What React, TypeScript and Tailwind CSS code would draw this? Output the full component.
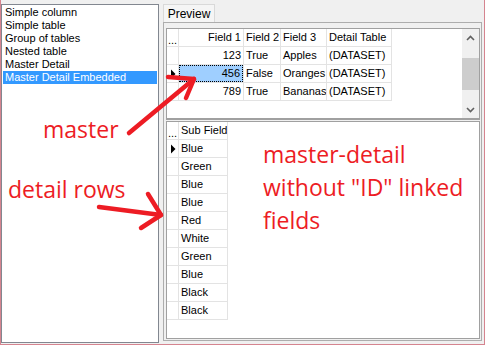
import React from "react";

const items = [
  "Simple column",
  "Simple table",
  "Group of tables",
  "Nested table",
  "Master Detail",
  "Master Detail Embedded",
];

const master = [
  { f1: "123", f2: "True", f3: "Apples", dt: "(DATASET)" },
  { f1: "456", f2: "False", f3: "Oranges", dt: "(DATASET)" },
  { f1: "789", f2: "True", f3: "Bananas", dt: "(DATASET)" },
];

const details = ["Blue", "Green", "Blue", "Blue", "Red", "White", "Green", "Blue", "Black", "Black"];

function Indicator({ active, header }: { active?: boolean; header?: boolean }) {
  return (
    <div className="flex h-[18px] w-[12px] shrink-0 items-center justify-center border-r border-b border-[#e3e3e3]">
      {header && <span className="mt-[6px] text-[11px] leading-none">...</span>}
      {active && (
        <svg width="6" height="10" viewBox="0 0 6 10" aria-hidden>
          <path d="M1 0.5 L5.5 5 L1 9.5 Z" fill="#000" />
        </svg>
      )}
    </div>
  );
}

function Cell({ w, children, right, selected }: { w: string; children: React.ReactNode; right?: boolean; selected?: boolean }) {
  return (
    <div className={`${w} flex h-[18px] shrink-0 items-center overflow-hidden border-r border-b border-[#e3e3e3]`}>
      <div
        className={`flex h-full w-full items-center whitespace-nowrap px-[2px] ${right ? "justify-end" : ""} ${
          selected ? "border border-dotted border-black bg-[#9fcfff] px-[1px]" : ""
        }`}
      >
        {children}
      </div>
    </div>
  );
}

function Chevron({ up }: { up?: boolean }) {
  return (
    <svg width="9" height="6" viewBox="0 0 9 6" aria-hidden>
      <path d={up ? "M1 5 L4.5 1.5 L8 5" : "M1 1 L4.5 4.5 L8 1"} fill="none" stroke="#606060" strokeWidth="1.6" />
    </svg>
  );
}

export default function App() {
  return (
    <div
      className="relative flex h-[345px] w-[485px] overflow-hidden border-r border-b border-l border-[#d5848f] bg-[#f0f0f0] text-[11px] text-black"
      style={{ fontFamily: '"Liberation Sans", Arial, sans-serif' }}
    >
      {/* list of samples */}
      <div className="mt-[4px] h-[339px] w-[158px] shrink-0 border border-[#828790] bg-white pt-[1px]">
        {items.map((it, i) => (
          <div
            key={it}
            className={`mx-[1px] h-[13px] whitespace-nowrap pl-[2px] leading-[13px] ${
              i === items.length - 1 ? "bg-[#3399ff] text-white" : ""
            }`}
          >
            {it}
          </div>
        ))}
      </div>

      {/* tab control */}
      <div className="ml-[4px] flex w-[319px] shrink-0 flex-col pt-[4px]">
        <div className="flex h-[18px]">
          <div className="flex w-[52px] items-center justify-center border-t border-r border-l border-[#d9d9d9] bg-[#f5f5f5] text-[12px]">
            Preview
          </div>
        </div>
        <div className="flex h-[319px] flex-col border border-[#adadad] pt-[5px] pr-[1px] pb-[1px] pl-[2px]">
          {/* master grid */}
          <div className="flex h-[91px] shrink-0 border border-[#a0a0a0] bg-white">
            <div className="flex-1">
              <div className="flex">
                <Indicator header />
                <Cell w="w-[65px]" right>Field 1</Cell>
                <Cell w="w-[37px]">Field 2</Cell>
                <Cell w="w-[46px]">Field 3</Cell>
                <Cell w="w-[65px]">Detail Table</Cell>
              </div>
              {master.map((r, i) => (
                <div key={r.f1} className="flex">
                  <Indicator active={i === 1} />
                  <Cell w="w-[65px]" right selected={i === 1}>
                    {r.f1}
                  </Cell>
                  <Cell w="w-[37px]">{r.f2}</Cell>
                  <Cell w="w-[46px]">{r.f3}</Cell>
                  <Cell w="w-[65px]">{r.dt}</Cell>
                </div>
              ))}
            </div>
            <div className="flex w-[17px] flex-col bg-[#f0f0f0]">
              <div className="flex h-[17px] items-center justify-center">
                <Chevron up />
              </div>
              <div className="flex-1 pt-[12px]">
                <div className="h-[32px] bg-[#cdcdcd]" />
              </div>
              <div className="flex h-[17px] items-center justify-center">
                <Chevron />
              </div>
            </div>
          </div>

          {/* splitter */}
          <div className="h-[2px] shrink-0 border-t border-[#a0a0a0]" />

          {/* detail grid */}
          <div className="flex-1 border border-[#a0a0a0] bg-white">
            <div className="flex">
              <Indicator header />
              <Cell w="w-[49px]">Sub Field</Cell>
            </div>
            {details.map((d, i) => (
              <div key={i} className="flex">
                <Indicator active={i === 0} />
                <Cell w="w-[49px]">{d}</Cell>
              </div>
            ))}
          </div>
        </div>
      </div>

      {/* annotations drawn over the screenshot */}
      <div
        className="pointer-events-none absolute inset-0 text-[23px] leading-[33px] text-[#ed1c24]"
        style={{ fontFamily: '"Open Sans", "Noto Sans", sans-serif' }}
      >
        <div className="absolute top-[113px] left-[42px]">master</div>
        <div className="absolute top-[173px] left-[7px]">detail rows</div>
        <div className="absolute top-[138px] left-[262px] whitespace-nowrap">
          master-detail
          <br />
          without "ID" linked
          <br />
          fields
        </div>
        <svg className="absolute inset-0" width="485" height="345" aria-hidden>
          <g fill="none" stroke="#ed1c24" strokeWidth="4.5" strokeLinecap="round" strokeLinejoin="round">
            <path d="M128 133 L193 79" />
            <path d="M167 77 L193 79 L185 98" />
            <path d="M98 207 L160 215" />
            <path d="M147 194 L160 215 L140 228" />
          </g>
        </svg>
      </div>
    </div>
  );
}
